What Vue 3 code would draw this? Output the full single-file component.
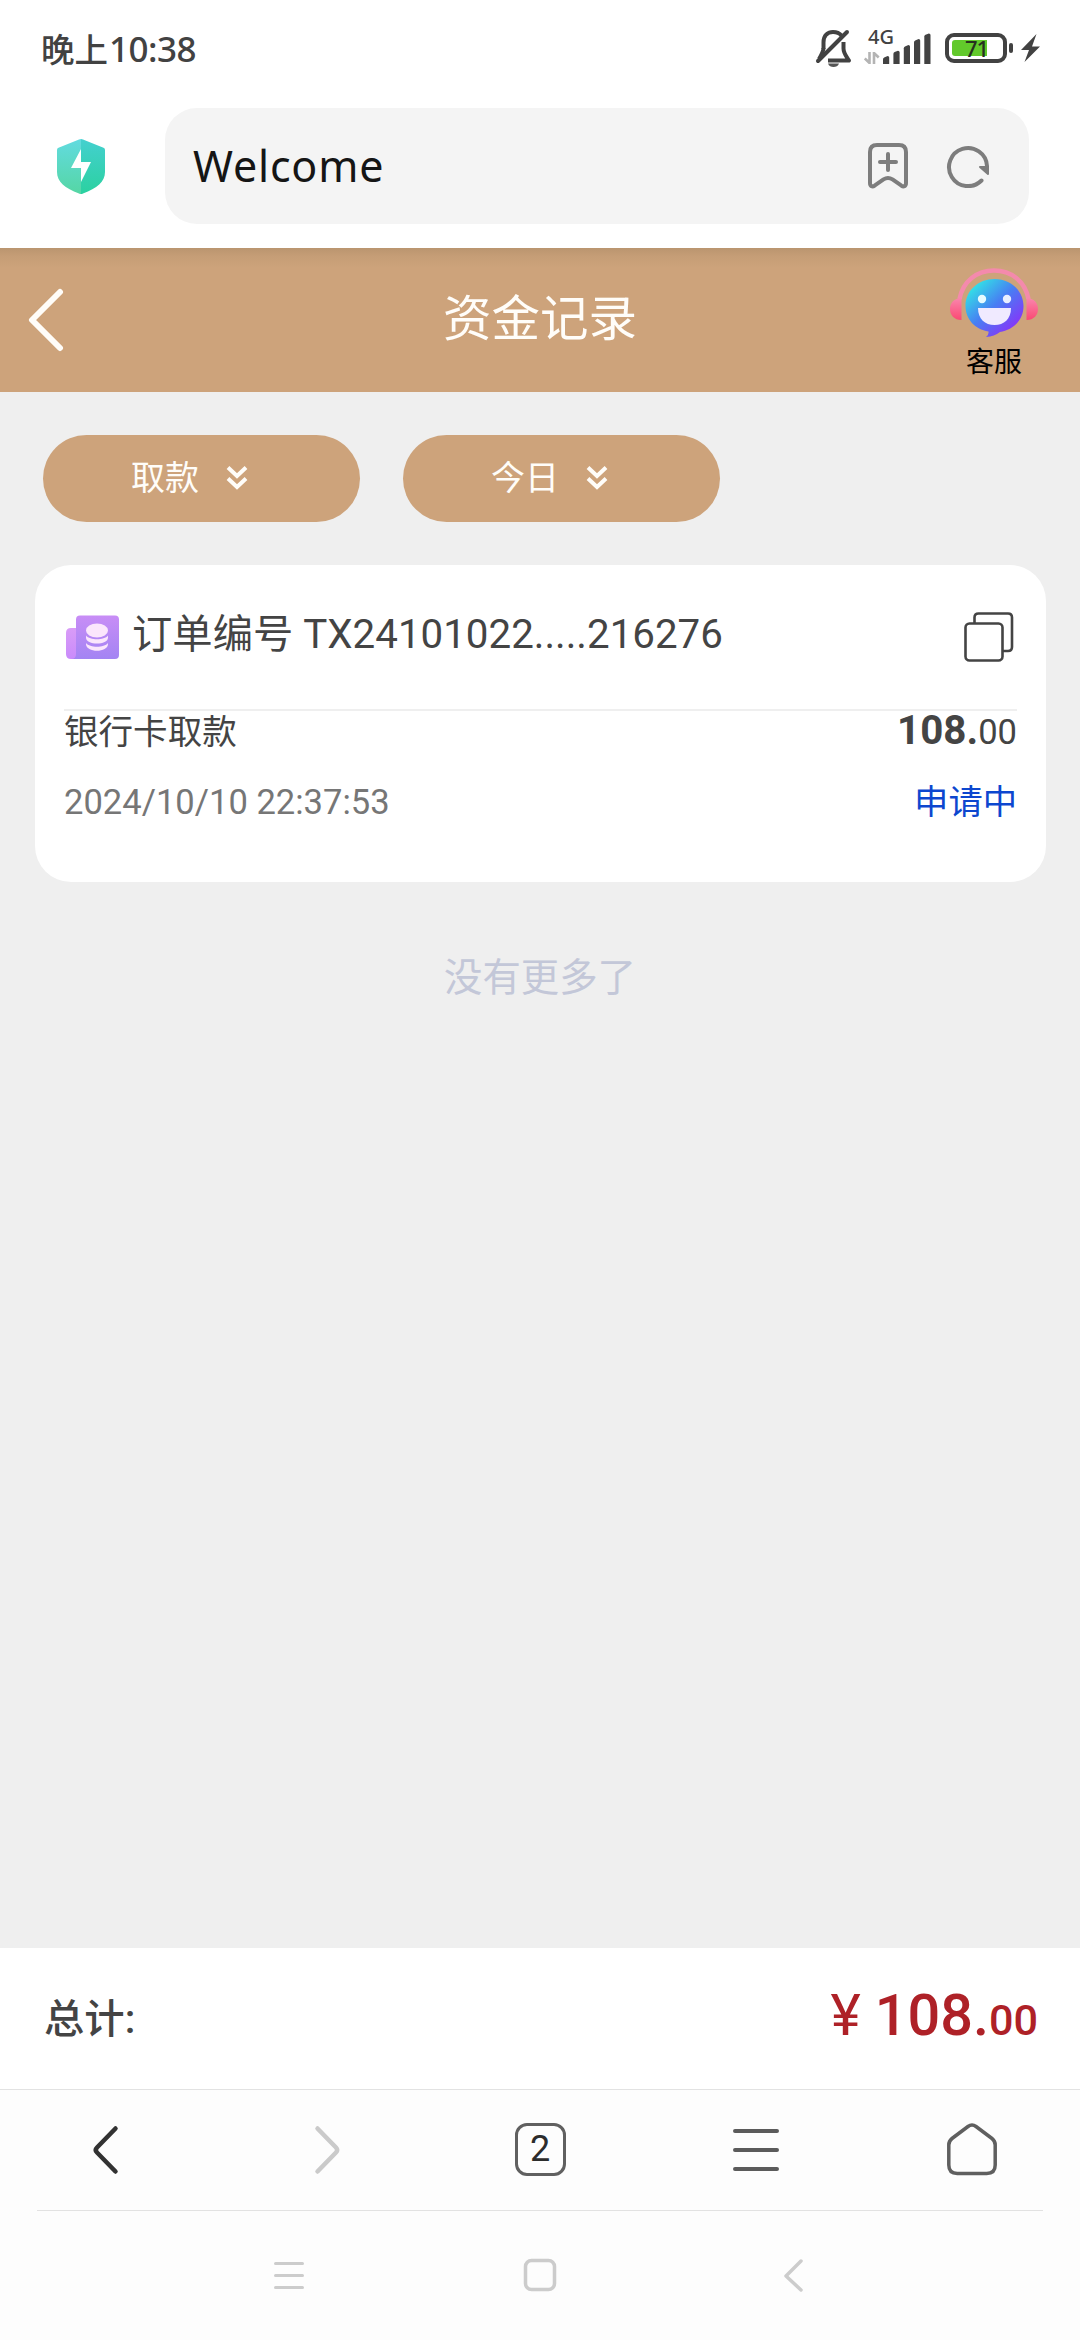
<script setup>
const filters = ['取款', '今日']
const signal = [
  { x: 0, h: 8 },
  { x: 10.4, h: 13.3 },
  { x: 20.8, h: 19 },
  { x: 31, h: 25 },
  { x: 41.3, h: 30.6 },
]
const order = {
  label: '订单编号',
  number: 'TX24101022.....216276',
  type: '银行卡取款',
  amount: '108.',
  cents: '00',
  time: '2024/10/10 22:37:53',
  status: '申请中',
}
</script>

<template>
  <div class="screen">
    <header class="status">
      <div class="clock"><span class="period">晚上</span><span class="time">10:38</span></div>
      <div class="indicators">
        <svg class="bell" width="38" height="40" viewBox="0 0 38 40" fill="none" stroke="#424242" stroke-width="4">
          <path d="M8.5 21V14.5C8.5 7 13 4 18 4c4 0 6.500 1.200 8.500 3.600M28.500 14v6.500c0 5 3 8 5.500 12H13" stroke-linejoin="round" />
          <path d="M3 33 32 4" stroke-linecap="round" />
          <path d="M8.500 20c0 3-1.500 6-4.500 11" />
          <path d="M13 35.500h11c-1 2.700-3 3.500-5.500 3.500s-4.500-.8-5.500-3.500z" fill="#555" stroke="none" />
        </svg>
        <div class="network">
          <span class="generation">4G</span>
          <svg width="16" height="12" viewBox="0 0 16 12" fill="none" stroke="#b4b4b4" stroke-width="2.600">
            <path d="M5.500 0v11L.8 6.500M10 12V1l4.700 4.500" />
          </svg>
        </div>
        <svg class="signal" width="48" height="31" viewBox="0 0 48 31" fill="#424242">
          <path v-for="bar in signal" :key="bar.x" :d="`M${bar.x} 31V${31 - bar.h + 3.2}Q${bar.x} ${31 - bar.h + 2} ${bar.x + 1.2} ${31 - bar.h + 1.4}L${bar.x + 4.6} ${31 - bar.h}Q${bar.x + 6.2} ${31 - bar.h} ${bar.x + 6.2} ${31 - bar.h + 1.5}V31z`" />
        </svg>
        <div class="battery"><div class="charge"></div><span class="percent">71</span></div>
        <i class="nub"></i>
        <svg class="bolt" width="19" height="28" viewBox="0 0 19 28" fill="#424242"><path d="M15.500 0 0 16h8L3.500 28 19 12.500h-8z" /></svg>
      </div>
    </header>

    <div class="browser">
      <svg class="shield" width="48" height="55" viewBox="0 0 48 55">
        <defs>
          <linearGradient id="shieldLeft" x1="0" y1="0" x2="0" y2="1"><stop offset="0" stop-color="#62dbe0" /><stop offset="1" stop-color="#55d6a4" /></linearGradient>
          <linearGradient id="shieldRight" x1="0" y1="0" x2="0" y2="1"><stop offset="0" stop-color="#44d0cf" /><stop offset="1" stop-color="#2bd1a0" /></linearGradient>
        </defs>
        <path d="M24 0q-1 0-2 .5L1.500 8.700Q0 9.300 0 11v22c0 10 8 16 22 21.500q1 .5 2 .5z" fill="url(#shieldLeft)" />
        <path d="M24 0q1 0 2 .5l20.500 8.200q1.500.6 1.500 2.300v22c0 10-8 16-22 21.500q-1 .5-2 .5z" fill="url(#shieldRight)" />
        <path d="M24 10v13h10L24 43V29H14z" fill="#fff" />
      </svg>
      <div class="address">
        <span class="page-name">Welcome</span>
        <svg width="40" height="46" viewBox="0 0 40 46" fill="none" stroke="#7d7d7d" stroke-width="4" stroke-linecap="round" stroke-linejoin="round">
          <path d="M9 2h22q7 0 7 7v31c0 3.500-2.500 4-4.500 2.700l-9-6.300Q20 33.500 15.500 36.400l-9 6.300C4.500 44 2 43.500 2 40V9q0-7 7-7z" />
          <path d="M20 11v16M12 19h16" />
        </svg>
        <svg width="44" height="44" viewBox="0 0 44 44" fill="none" stroke="#7d7d7d" stroke-width="4" stroke-linecap="round">
          <path d="M35.500 36.500A19 19 0 1 1 41 22v5" />
          <path d="M34 23h8v7z" fill="#7d7d7d" stroke-width="2" stroke-linejoin="round" />
        </svg>
      </div>
    </div>

    <nav class="titlebar">
      <svg class="back" width="36" height="64" viewBox="0 0 36 64" fill="none" stroke="#fffdf9" stroke-width="6" stroke-linecap="round" stroke-linejoin="round"><path d="M32 4 4 32l28 28" /></svg>
      <h1>资金记录</h1>
      <div class="service">
        <svg width="88" height="70" viewBox="0 0 88 70">
          <defs>
            <linearGradient id="bubble" x1=".1" y1=".1" x2=".85" y2=".9"><stop offset="0" stop-color="#31e8e5" /><stop offset=".48" stop-color="#477ff3" /><stop offset="1" stop-color="#8b2ff9" /></linearGradient>
            <linearGradient id="ear" x1="0" y1="0" x2="0" y2="1"><stop offset="0" stop-color="#fa86ad" /><stop offset="1" stop-color="#fa4973" /></linearGradient>
          </defs>
          <path d="M9.500 31C13 13 27 2.500 44 2.500S75 13 78.500 31" fill="none" stroke="#f48aac" stroke-width="4.500" />
          <path d="M11.500 30v22C4 52 0 47 0 41s4-11 11.500-11zM76.500 30v22C84 52 88 47 88 41s-4-11-11.500-11z" fill="url(#ear)" />
          <path d="M44.500 11C61 11 73.500 23 73.500 38S62 62 50 64c-4 3-8 4.500-14 5q3-2 2.500-5.500C25 61.500 15.500 51 15.500 38 15.500 23 28 11 44.500 11z" fill="url(#bubble)" />
          <circle cx="32" cy="31" r="4.200" fill="#e7fbff" /><circle cx="57" cy="31" r="4.200" fill="#e9eeff" />
          <path d="M28 40h33c0 11-7 17-16.500 17S28 51 28 40z" fill="#f0eaff" />
        </svg>
        <span>客服</span>
      </div>
    </nav>

    <main class="content">
      <div class="filters">
        <button v-for="item in filters" :key="item" class="filter">
          <span>{{ item }}</span>
          <svg width="22" height="25" viewBox="0 0 22 25" fill="none" stroke="#fffdf9" stroke-width="4"><path d="m2 2.500 9 8.500 9-8.500M2 13.500l9 8.500 9-8.500" /></svg>
        </button>
      </div>

      <section class="card">
        <div class="order-head">
          <svg class="coins" width="54" height="45" viewBox="0 0 54 45">
            <defs>
              <linearGradient id="folder" x1="0" y1="0" x2="0" y2="1"><stop offset="0" stop-color="#c88df6" /><stop offset="1" stop-color="#a384f3" /></linearGradient>
              <linearGradient id="tab" x1="0" y1="0" x2="0" y2="1"><stop offset="0" stop-color="#d99cf7" /><stop offset="1" stop-color="#c98bfb" /></linearGradient>
            </defs>
            <path d="M5 13h12v31H5q-5 0-5-5V18q0-5 5-5z" fill="url(#tab)" />
            <path d="M14 .500h35q4 0 4 4V40q0 4-4 4H6q4-.5 4-5V4.500q0-4 4-4z" fill="url(#folder)" />
            <g fill="#fbe6fc">
              <ellipse cx="31" cy="15.500" rx="11" ry="7" />
              <path d="M20 20.500c4 5 18 5 22 0v2c0 8-22 8-22 0zM20 28c4 5 18 5 22 0v1c0 9-22 9-22 0z" />
            </g>
          </svg>
          <span class="order-id">{{ order.label }} {{ order.number }}</span>
          <svg width="50" height="50" viewBox="0 0 50 50" fill="none" stroke="#444" stroke-width="2.600">
            <path d="M10.500 11V5.500q0-4 4-4H44q4 0 4 4V35q0 4-4 4h-5" />
            <rect x="1.500" y="11.500" width="37" height="37" rx="4" />
          </svg>
        </div>
        <div class="row type"><span>{{ order.type }}</span><span class="amount"><b>{{ order.amount }}</b>{{ order.cents }}</span></div>
        <div class="row when"><time>{{ order.time }}</time><span class="state">{{ order.status }}</span></div>
      </section>

      <p class="end">没有更多了</p>
    </main>

    <footer class="total">
      <span class="total-label">总计:</span>
      <span class="sum"><span class="yen">¥</span>108.<small>00</small></span>
    </footer>

    <nav class="toolbar">
      <svg width="50" height="54" viewBox="0 0 50 54" fill="none" stroke="#323232" stroke-width="4.500" stroke-linecap="round"><path d="M32.500 5.500 14 24.500q-2.500 2.500 0 5l18.500 19" /></svg>
      <svg width="50" height="54" viewBox="0 0 50 54" fill="none" stroke="#cacaca" stroke-width="4.500" stroke-linecap="round"><path d="m18.500 5.500 18.500 19q2.500 2.500 0 5l-18.500 19" /></svg>
      <span class="tabs">2</span>
      <svg width="50" height="54" viewBox="0 0 50 54" fill="none" stroke="#5b5b5b" stroke-width="4" stroke-linecap="round"><path d="M4 8h42M4 27h42M4 46h42" /></svg>
      <svg width="50" height="54" viewBox="0 0 50 54" fill="none" stroke="#5f5f5f" stroke-width="3.500" stroke-linejoin="round"><path d="M21 3.500q4-3 8 0l16 12q3.200 2.500 3.200 6.500v20q0 8.500-8.500 8.500H10.300q-8.500 0-8.500-8.500V22q0-4 3.200-6.500z" /></svg>
    </nav>

    <nav class="system">
      <svg width="34" height="36" viewBox="0 0 34 36" fill="none" stroke="#ccc" stroke-width="3" stroke-linecap="round"><path d="M3.500 6.500h27M3.500 18.500h27M3.500 30.500h27" /></svg>
      <svg width="34" height="36" viewBox="0 0 34 36" fill="none" stroke="#ccc" stroke-width="3.500"><rect x="2.500" y="3.500" width="29" height="29" rx="6" /></svg>
      <svg width="34" height="36" viewBox="0 0 34 36" fill="none" stroke="#ccc" stroke-width="3.500" stroke-linecap="round" stroke-linejoin="round"><path d="M27 4 12 19l15 14" /></svg>
    </nav>
  </div>
</template>

<style>
body {
  margin: 0;
}
</style>

<style scoped>
.screen {
  display: flex;
  flex-direction: column;
  width: 1080px;
  height: 2340px;
  overflow: hidden;
  background: #fff;
  color: #444;
  font-family: Roboto, "Noto Sans CJK SC", sans-serif;
}
.screen svg {
  display: block;
  flex: none;
}
.status {
  display: flex;
  justify-content: space-between;
  height: 98px;
  box-sizing: border-box;
  padding: 0 40px 0 41px;
  color: #424242;
}
.clock {
  display: flex;
  height: 98px;
  line-height: 98px;
  font-weight: 500;
}
.period {
  font-family: "Noto Sans CJK SC", sans-serif;
  font-size: 33.500px;
  line-height: 96px;
}
.time {
  margin-left: 1px;
  font-family: "Noto Sans", sans-serif;
  font-size: 35px;
  letter-spacing: -0.500px;
}
.indicators {
  display: flex;
  align-items: flex-start;
}
.bell {
  margin-top: 28px;
}
.network {
  width: 30px;
  margin: 27px 0 0 11px;
}
.generation {
  display: block;
  height: 25px;
  margin-left: 4px;
  font: 500 20px/20px "Noto Sans", sans-serif;
}
.signal {
  margin: 33px 0 0 -11px;
}
.battery {
  position: relative;
  width: 62px;
  height: 30px;
  box-sizing: border-box;
  margin: 33px 0 0 14px;
  padding: 3px;
  border: 4px solid #424242;
  border-radius: 9px;
}
.charge {
  width: 35px;
  height: 16px;
  border-radius: 3px 0 0 3px;
  background: #62c92b;
}
.percent {
  position: absolute;
  inset: 0 0 0 1px;
  color: #26301f;
  font: 500 22px/22px "Noto Sans", sans-serif;
  letter-spacing: -1px;
  text-align: center;
}
.nub {
  width: 4px;
  height: 10px;
  margin: 43px 0 0 2px;
  border-radius: 2px;
  background: #424242;
}
.bolt {
  margin: 34px 0 0 8px;
}
.browser {
  display: flex;
  align-items: flex-start;
  height: 150px;
  box-sizing: border-box;
  padding: 10px 51px 0 57px;
}
.shield {
  margin-top: 31px;
}
.address {
  display: flex;
  flex: 1;
  align-items: center;
  height: 116px;
  box-sizing: border-box;
  margin-left: 60px;
  padding: 0 39px 0 28px;
  border-radius: 32px;
  background: #f4f4f4;
}
.page-name {
  flex: 1;
  color: #151515;
  font: 400 43px/116px "Noto Sans", sans-serif;
  letter-spacing: 0.800px;
}
.address svg + svg {
  margin-left: 38px;
}
.titlebar {
  display: grid;
  grid-template-columns: 1fr auto 1fr;
  align-items: center;
  height: 144px;
  background: linear-gradient(#ba956f, #c59d76 8px, #cda37b 20px);
}
.back {
  margin-left: 28px;
}
h1 {
  margin: 0;
  color: #fffdf9;
  font-size: 48.500px;
  font-weight: 400;
  line-height: 144px;
}
.service {
  display: flex;
  flex-direction: column;
  align-items: center;
  align-self: start;
  justify-self: end;
  margin: 20px 42px 0 0;
  color: #000;
  font-size: 28px;
  line-height: 50px;
}
.content {
  flex: 1;
  background: #efefef;
}
.filters {
  display: flex;
  gap: 43px;
  padding: 43px 43px 0;
}
.filter {
  display: flex;
  align-items: center;
  width: 317px;
  height: 87px;
  padding: 0 0 2px 88px;
  border: 0;
  border-radius: 44px;
  background: #cda37b;
  color: #fffdf9;
  font-family: inherit;
  font-size: 34px;
}
.filter span {
  padding-bottom: 4px;
}
.filter svg {
  margin-left: 27px;
}
.card {
  height: 317px;
  box-sizing: border-box;
  margin: 43px 34px 0 35px;
  padding: 0 29px;
  border-radius: 36px;
  background: #fff;
}
.order-head {
  display: flex;
  align-items: center;
  height: 146px;
  box-sizing: border-box;
  padding: 0 3px 0 2px;
  border-bottom: 2px solid #efefef;
}
.order-id {
  flex: 1;
  margin-left: 12px;
  padding-bottom: 14px;
  font-size: 40.320px;
}
.row {
  display: flex;
  align-items: baseline;
  justify-content: space-between;
  height: 71px;
  font-size: 34.560px;
  line-height: 40px;
}
.amount b {
  font-size: 40.320px;
}
.when time {
  color: #767676;
}
.state {
  color: #0d47cf;
  font-size: 34.300px;
}
.end {
  margin: 68px 0 0;
  color: #c3c7d8;
  font-size: 38.400px;
  line-height: 56px;
  text-align: center;
}
.total {
  display: flex;
  align-items: center;
  justify-content: space-between;
  height: 141px;
  box-sizing: border-box;
  padding: 0 42px 6px 44px;
  font-weight: 500;
}
.total-label {
  font-size: 40.320px;
}
.sum {
  color: #ae2127;
  font-size: 57.600px;
}
.yen {
  margin-right: 14px;
  font-weight: 400;
}
small {
  font-size: 43.200px;
}
.toolbar {
  display: flex;
  align-items: center;
  justify-content: space-between;
  height: 121px;
  box-sizing: border-box;
  padding: 0 83px;
  border-top: 1px solid #e2e2e2;
  background: #fdfdfd;
}
.tabs {
  width: 51px;
  height: 53px;
  box-sizing: border-box;
  margin-bottom: 2px;
  border: 3.500px solid #606060;
  border-radius: 12px;
  color: #2c2c2c;
  font: 400 36px/47px Roboto, sans-serif;
  text-align: center;
}
.system {
  display: flex;
  flex: none;
  align-items: flex-start;
  justify-content: center;
  gap: 217px;
  height: 130px;
  background: linear-gradient(#e2e2e2, #e2e2e2) 37px 0 / 1006px 1px no-repeat #fdfdfd;
}
.system svg {
  margin-top: 47px;
}
</style>
